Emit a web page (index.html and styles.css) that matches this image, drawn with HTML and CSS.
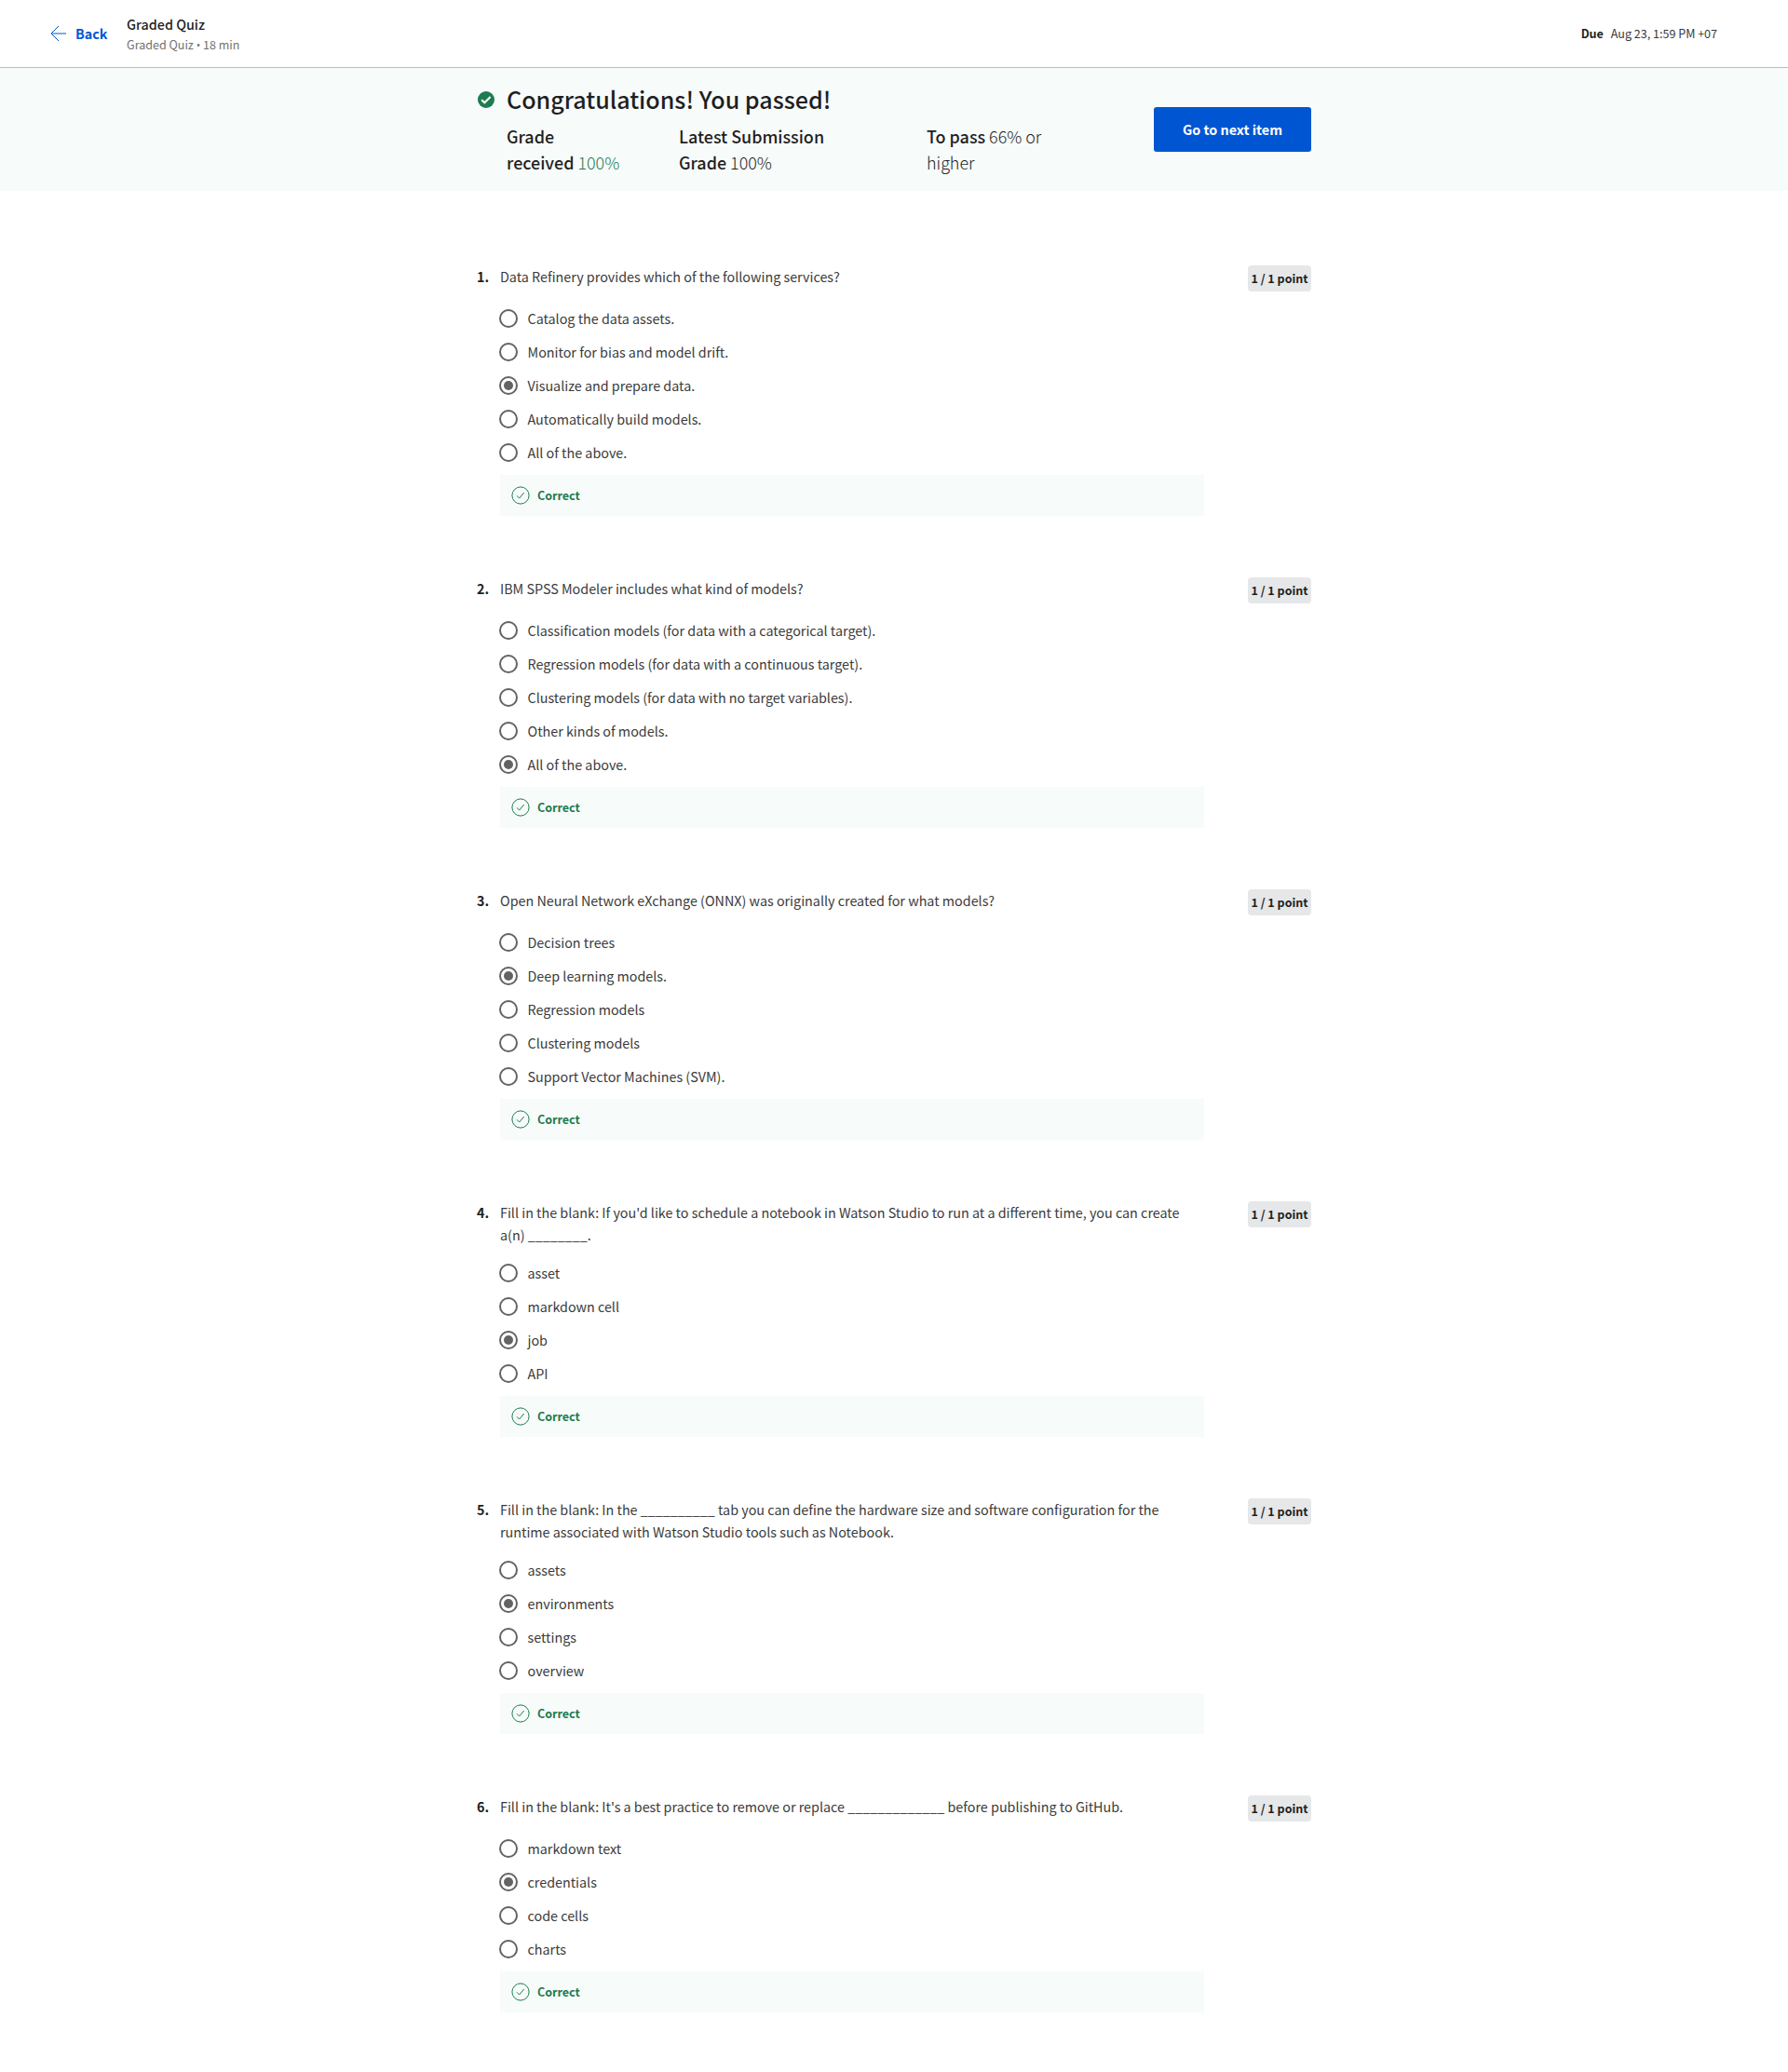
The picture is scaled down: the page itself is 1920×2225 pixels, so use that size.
FILE: index.html
```html
<!DOCTYPE html>
<html lang="en">
<head>
<meta charset="utf-8">
<title>Graded Quiz</title>
<link rel="stylesheet" href="styles.css">
</head>
<body>
<svg width="0" height="0" class="defs" aria-hidden="true">
  <symbol id="ok" viewBox="0 0 20 20"><circle cx="10" cy="10" r="9.1"/><path d="M6 10.3l2.7 2.7 5-6"/></symbol>
</svg>
<header class="topbar">
  <a class="back"><svg width="18" height="18" viewBox="0 0 18 18"><path d="M9 1L1 9l8 8M1 9h16"/></svg><span>Back</span></a>
  <div class="heading"><div class="title">Graded Quiz</div><div class="subtitle">Graded Quiz <span class="dot">•</span> 18 min</div></div>
  <div class="due"><b>Due</b><span>Aug 23, 1:59 PM +07</span></div>
</header>
<section class="banner">
  <div class="banner-inner">
    <svg class="pass" width="18" height="18" viewBox="0 0 18 18"><circle cx="9" cy="9" r="9"/><path d="M4.2 9.2l3.1 3.1 6.3-6.3"/></svg>
    <div class="result">
      <h1>Congratulations! You passed!</h1>
      <div class="grades">
        <p class="g1"><b>Grade<br>received</b> <span class="green">100%</span></p>
        <p class="g2"><b>Latest Submission<br>Grade</b> 100%</p>
        <p class="g3"><b>To pass</b> 66% or<br>higher</p>
      </div>
    </div>
    <a class="next">Go to next item</a>
  </div>
</section>
<main class="quiz">
  <section class="question">
    <div class="num">1.</div>
    <div class="body">
      <p class="prompt">Data Refinery provides which of the following services?</p>
      <ul>
        <li><i></i>Catalog the data assets.</li>
        <li><i></i>Monitor for bias and model drift.</li>
        <li><i class="on"></i>Visualize and prepare data.</li>
        <li><i></i>Automatically build models.</li>
        <li><i></i>All of the above.</li>
      </ul>
      <div class="correct"><svg width="20" height="20"><use href="#ok"/></svg>Correct</div>
    </div>
    <div class="points">1 / 1 point</div>
  </section>
  <section class="question">
    <div class="num">2.</div>
    <div class="body">
      <p class="prompt">IBM SPSS Modeler includes what kind of models?</p>
      <ul>
        <li><i></i>Classification models (for data with a categorical target).</li>
        <li><i></i>Regression models (for data with a continuous target).</li>
        <li><i></i>Clustering models (for data with no target variables).</li>
        <li><i></i>Other kinds of models.</li>
        <li><i class="on"></i>All of the above.</li>
      </ul>
      <div class="correct"><svg width="20" height="20"><use href="#ok"/></svg>Correct</div>
    </div>
    <div class="points">1 / 1 point</div>
  </section>
  <section class="question">
    <div class="num">3.</div>
    <div class="body">
      <p class="prompt">Open Neural Network eXchange (ONNX) was originally created for what models?</p>
      <ul>
        <li><i></i>Decision trees</li>
        <li><i class="on"></i>Deep learning models.</li>
        <li><i></i>Regression models</li>
        <li><i></i>Clustering models</li>
        <li><i></i>Support Vector Machines (SVM).</li>
      </ul>
      <div class="correct"><svg width="20" height="20"><use href="#ok"/></svg>Correct</div>
    </div>
    <div class="points">1 / 1 point</div>
  </section>
  <section class="question">
    <div class="num">4.</div>
    <div class="body">
      <p class="prompt">Fill in the blank: If you'd like to schedule a notebook in Watson Studio to run at a different time, you can create<br>a(n) ________.</p>
      <ul>
        <li><i></i>asset</li>
        <li><i></i>markdown cell</li>
        <li><i class="on"></i>job</li>
        <li><i></i>API</li>
      </ul>
      <div class="correct"><svg width="20" height="20"><use href="#ok"/></svg>Correct</div>
    </div>
    <div class="points">1 / 1 point</div>
  </section>
  <section class="question">
    <div class="num">5.</div>
    <div class="body">
      <p class="prompt">Fill in the blank: In the __________ tab you can define the hardware size and software configuration for the<br>runtime associated with Watson Studio tools such as Notebook.</p>
      <ul>
        <li><i></i>assets</li>
        <li><i class="on"></i>environments</li>
        <li><i></i>settings</li>
        <li><i></i>overview</li>
      </ul>
      <div class="correct"><svg width="20" height="20"><use href="#ok"/></svg>Correct</div>
    </div>
    <div class="points">1 / 1 point</div>
  </section>
  <section class="question">
    <div class="num">6.</div>
    <div class="body">
      <p class="prompt">Fill in the blank: It's a best practice to remove or replace _____________ before publishing to GitHub.</p>
      <ul>
        <li><i></i>markdown text</li>
        <li><i class="on"></i>credentials</li>
        <li><i></i>code cells</li>
        <li><i></i>charts</li>
      </ul>
      <div class="correct"><svg width="20" height="20"><use href="#ok"/></svg>Correct</div>
    </div>
    <div class="points">1 / 1 point</div>
  </section>
</main>
</body>
</html>
```
FILE: styles.css
```css
* { box-sizing: border-box; }
body {
  margin: 0;
  min-height: 2225px;
  background: #fff;
  color: #1f1f1f;
  font: 400 14.33px/24px "Noto Sans CJK SC", "Noto Sans CJK JP", sans-serif;
}
p, h1, ul { margin: 0; padding: 0; }
ul { list-style: none; }
svg { display: block; flex: none; fill: none; }
.defs { display: none; }

.topbar {
  display: flex;
  align-items: center;
  height: 73px;
  padding: 0 76px 0 54px;
  border-bottom: 1px solid #bdbdbd;
  white-space: nowrap;
}
.back { display: flex; align-items: center; width: 82px; gap: 9px; color: #0056d2; font-weight: 700; }
.back svg { stroke: #0056d2; stroke-width: 1; }
.title { font-weight: 500; line-height: 22px; }
.subtitle { color: #707070; font-size: 12.54px; line-height: 21px; }
.dot { font-family: "Open Sans", sans-serif; font-size: 12px; line-height: 1; }
.due { display: flex; gap: 8px; margin-left: auto; font-size: 12.54px; }
.due span { color: #3a3a3a; }

.banner { height: 132px; background: #f7fbfa; }
.banner-inner { display: flex; width: 896px; margin: 0 auto; }
.pass { margin: 25px 0 0 1px; fill: #1d7c50; }
.pass path { fill: none; stroke: #fff; stroke-width: 2; }
.result { width: 708px; padding: 17px 0 0 13px; white-space: nowrap; }
h1 { font-size: 25.07px; font-weight: 500; line-height: 32px; }
.grades { display: flex; padding-top: 10px; font-size: 17.92px; font-weight: 300; line-height: 28px; }
.grades b { font-weight: 500; }
.g1 { width: 185px; }
.g2 { width: 266px; }
.green { color: #1d7c50; }
.next {
  width: 169px;
  height: 48px;
  margin-top: 42px;
  border-radius: 3px;
  background: #0056d2;
  color: #fff;
  font-weight: 700;
  line-height: 48px;
  text-align: center;
  white-space: nowrap;
}

.quiz { width: 896px; margin: 0 auto; padding-top: 80px; }
.question { display: flex; align-items: flex-start; margin-bottom: 66px; white-space: nowrap; }
.num { width: 25px; font-weight: 700; }
.body { width: 756px; color: #3a3a3a; }
.prompt { min-height: 39px; padding-bottom: 11px; }
li { display: flex; align-items: center; height: 36px; margin-left: -1px; }
li i { width: 20px; height: 20px; margin-right: 10.5px; padding: 3px; border: 2px solid #636363; border-radius: 50%; }
li .on { background: #636363 content-box; }
.correct {
  display: flex;
  align-items: center;
  gap: 8px;
  height: 44px;
  margin-top: 6px;
  padding-left: 12px;
  background: #f7fbfa;
  color: #1d7c50;
  font-size: 12.54px;
  font-weight: 700;
}
.correct svg { stroke: #1d7c50; stroke-width: 1; }
.points {
  width: 68px;
  height: 28px;
  margin-left: auto;
  border-radius: 4px;
  background: #e5e7e8;
  font-size: 12.54px;
  font-weight: 700;
  line-height: 28px;
  text-align: center;
}
```
